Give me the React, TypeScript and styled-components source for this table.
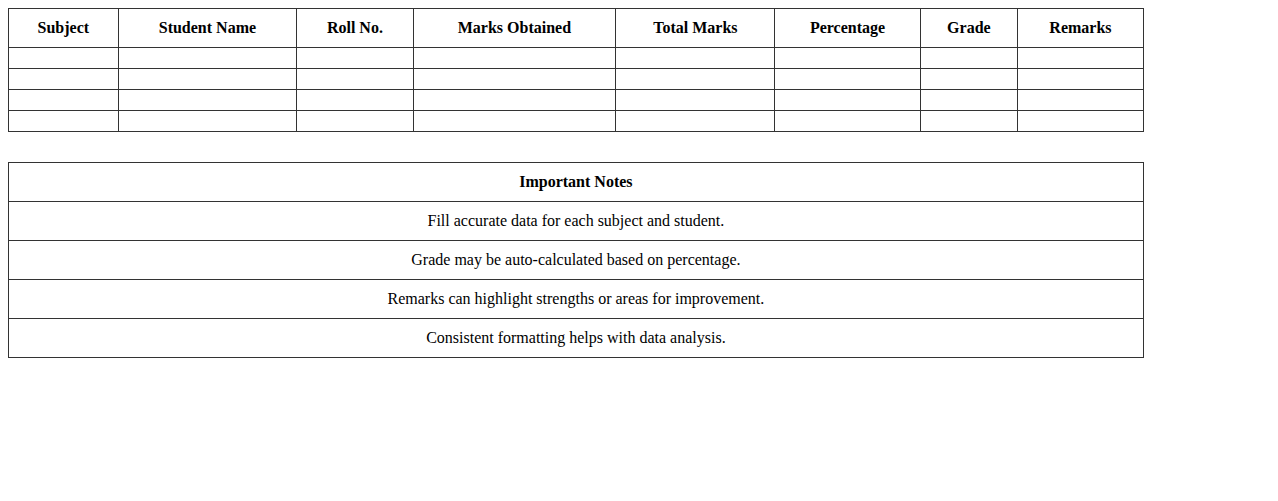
import React from 'react';
import styled, { createGlobalStyle } from 'styled-components';

const GlobalStyle = createGlobalStyle`
  body {
    margin: 8px;
    font-family: "Liberation Serif", "Times New Roman", serif;
    font-size: 16px;
    color: #000;
    background: #fff;
  }
`;

const Table = styled.table<{ spaced?: boolean }>`
  width: 90%;
  border-collapse: collapse;
  margin-top: ${(props) => (props.spaced ? '30px' : '0')};
`;

const HeadCell = styled.th`
  border: 1px solid #333;
  padding: 10px;
  text-align: center;
  font-weight: bold;
`;

const Cell = styled.td`
  border: 1px solid #333;
  padding: 10px;
  text-align: center;
`;

const columns = [
  'Subject',
  'Student Name',
  'Roll No.',
  'Marks Obtained',
  'Total Marks',
  'Percentage',
  'Grade',
  'Remarks',
];

const notes = [
  'Fill accurate data for each subject and student.',
  'Grade may be auto-calculated based on percentage.',
  'Remarks can highlight strengths or areas for improvement.',
  'Consistent formatting helps with data analysis.',
];

const App = () => {
  return (
    <>
      <GlobalStyle />
      <Table>
        <thead>
          <tr>
            {columns.map((col) => (
              <HeadCell key={col}>{col}</HeadCell>
            ))}
          </tr>
        </thead>
        <tbody>
          {[0, 1, 2, 3].map((row) => (
            <tr key={row}>
              {columns.map((col) => (
                <Cell key={col} />
              ))}
            </tr>
          ))}
        </tbody>
      </Table>
      <Table spaced>
        <thead>
          <tr>
            <HeadCell>Important Notes</HeadCell>
          </tr>
        </thead>
        <tbody>
          {notes.map((note) => (
            <tr key={note}>
              <Cell>{note}</Cell>
            </tr>
          ))}
        </tbody>
      </Table>
    </>
  );
};

export default App;
